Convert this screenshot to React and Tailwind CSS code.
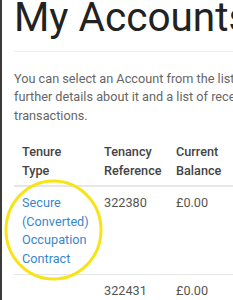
import React from 'react';

const rows = [
  { tenure: 'Secure (Converted) Occupation Contract', ref: '322380', balance: '£0.00' },
  { tenure: '', ref: '322431', balance: '£0.00' },
];

const App = () => {
  return (
    <div className="relative w-[233px] h-[300px] overflow-hidden bg-white border-l-2 border-[#3b3b3b] font-['Roboto',sans-serif]">
      <div className="w-[420px] pl-[12px]">
        {/* heading */}
        <h1 className="-mt-[3px] text-[40.5px] leading-none font-normal text-[#222]">My Accounts</h1>
        <hr className="mt-[13px] border-0 border-t border-[#eeeeee]" />

        <p className="mt-[18px] mb-[8px] w-[292px] text-[12.7px] leading-[18.5px] text-[#666]">
          You can select an Account from the list to see further details about it and a list of recent
          transactions.
        </p>

        {/* accounts table */}
        <table className="table-fixed w-[360px] text-[12.7px] leading-[18.5px] border-collapse">
          <thead>
            <tr className="border-b-2 border-[#e6e6e6]">
              <th className="w-[82px] px-[8px] pt-[10px] pb-[5px] text-left align-bottom font-medium text-[#444]">
                Tenure Type
              </th>
              <th className="w-[72px] px-[8px] pt-[10px] pb-[5px] text-left align-bottom font-medium text-[#444]">
                Tenancy Reference
              </th>
              <th className="w-[72px] px-[8px] pt-[10px] pb-[5px] text-left align-bottom font-medium text-[#444]">
                Current Balance
              </th>
              <th className="px-[8px] pt-[10px] pb-[5px]"></th>
            </tr>
          </thead>
          <tbody>
            {rows.map((row) => (
              <tr key={row.ref} className="border-b border-[#e6e6e6]">
                <td className="px-[8px] pt-[7px] pb-[6px] align-top">
                  <a href="#" className="text-[#3588cc]">{row.tenure}</a>
                </td>
                <td className="px-[8px] pt-[7px] pb-[6px] align-top text-[#555]">{row.ref}</td>
                <td className="px-[8px] pt-[7px] pb-[6px] align-top text-[#555]">{row.balance}</td>
                <td className="px-[8px] pt-[7px] pb-[6px]"></td>
              </tr>
            ))}
          </tbody>
        </table>
      </div>

      {/* highlight ring */}
      <svg className="absolute left-0 top-0 pointer-events-none" width="233" height="300">
        <ellipse cx="51.5" cy="230" rx="47.5" ry="49" fill="none" stroke="#f7e418" strokeWidth="3" />
      </svg>
    </div>
  );
};

export default App;
